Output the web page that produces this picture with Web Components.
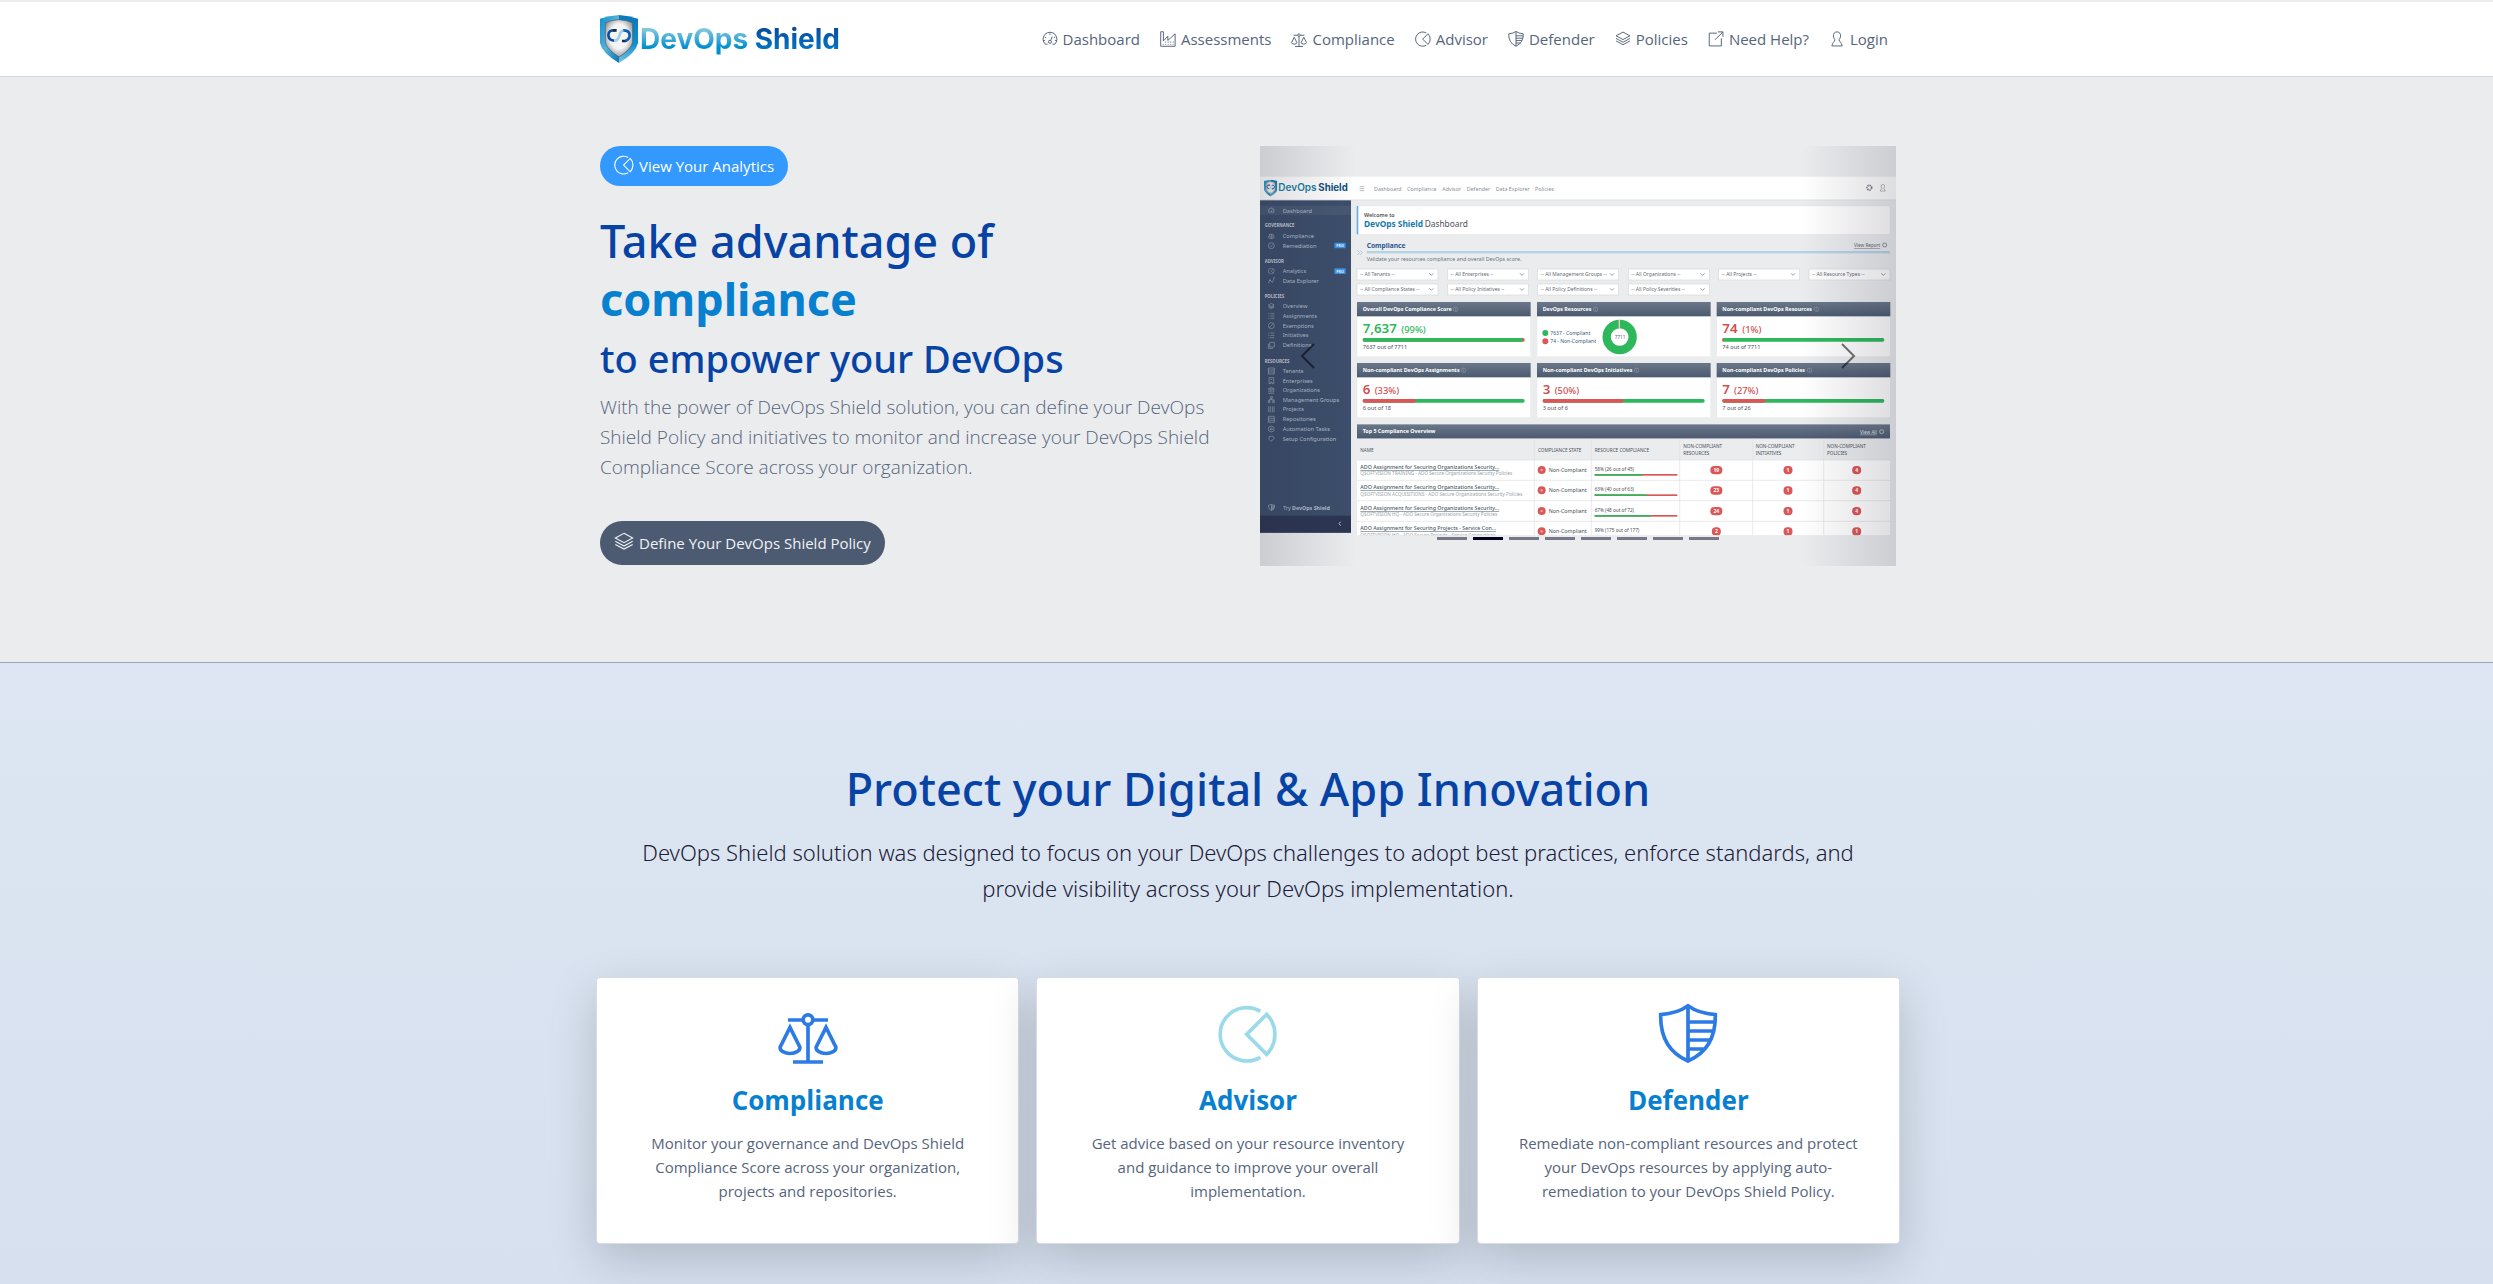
<!DOCTYPE html>
<html lang="en">
<head>
<meta charset="utf-8">
<title>DevOps Shield</title>
<style>
  html, body { margin: 0; }
  body {
    --navy: #0643a5;
    --blue: #0880d0;
    --slate: #56657c;
    --heading: "Noto Sans", "Open Sans", sans-serif;
    min-height: 100vh;
    display: flex;
    flex-direction: column;
    overflow: hidden;
    background: #fff;
    color: var(--slate);
    font: 15px/24px "Open Sans", "Noto Sans", sans-serif;
  }
  ds-protect { flex: 1; }
</style>
</head>
<body>
<ds-header>
  <ds-logo slot="brand"></ds-logo>
  <ds-nav-link icon="gauge">Dashboard</ds-nav-link>
  <ds-nav-link icon="factory">Assessments</ds-nav-link>
  <ds-nav-link icon="scales">Compliance</ds-nav-link>
  <ds-nav-link icon="pie">Advisor</ds-nav-link>
  <ds-nav-link icon="shield">Defender</ds-nav-link>
  <ds-nav-link icon="layers">Policies</ds-nav-link>
  <ds-nav-link icon="external">Need Help?</ds-nav-link>
  <ds-nav-link icon="user">Login</ds-nav-link>
</ds-header>
<ds-hero>
  <ds-pill slot="top" icon="pie">View Your Analytics</ds-pill>
  <span slot="title">Take advantage of</span>
  <span slot="accent">compliance</span>
  <span slot="subtitle">to empower your DevOps</span>
  <span slot="text">With the power of DevOps Shield solution, you can define your DevOps Shield Policy and initiatives to monitor and increase your DevOps Shield Compliance Score across your organization.</span>
  <ds-pill slot="bottom" icon="layers" tone="dark">Define Your DevOps Shield Policy</ds-pill>
  <ds-carousel slot="media"><ds-dashboard-picture></ds-dashboard-picture></ds-carousel>
</ds-hero>
<ds-protect>
  <span slot="title">Protect your Digital &amp; App Innovation</span>
  <span slot="lead">DevOps Shield solution was designed to focus on your DevOps challenges to adopt best practices, enforce standards, and provide visibility across your DevOps implementation.</span>
  <ds-card icon="scales"><span slot="title">Compliance</span>Monitor your governance and DevOps Shield Compliance Score across your organization, projects and repositories.</ds-card>
  <ds-card icon="pie" tone="light"><span slot="title">Advisor</span>Get advice based on your resource inventory and guidance to improve your overall implementation.</ds-card>
  <ds-card icon="shield"><span slot="title">Defender</span>Remediate non-compliant resources and protect your DevOps resources by applying auto-remediation to your DevOps Shield Policy.</ds-card>
</ds-protect>

<script>
// Line icons on a 180-unit grid.
const ICONS = {
  scales: '<path d="M30 48H76M104 48H150M90 62V174M45 174H135"/><circle cx="90" cy="47" r="14.500"/><path d="M36 70 7 128Q4 136 13 142 36 155 59 142 68 136 65 128ZM144 70 115 128Q112 136 121 142 144 155 167 142 176 136 173 128Z"/>',
  pie: '<path d="M127 22A80 80 0 1 0 127 160"/><path d="M86 91 146 31A85 85 0 0 1 146 151Z"/>',
  shield: '<path d="M90 5Q60 28 8 32 6 135 90 171 174 135 172 32 120 28 90 5ZM90 5V171M90 54H169M90 81H166M90 108H157M90 135H141"/>',
  gauge: '<path d="M36 148A78 78 0 1 1 144 148M36 148H62M118 148H144M90 26V46M30 66 46 76M150 66 134 76M14 106H34M146 106H166"/><circle cx="90" cy="122" r="17"/><path d="M97 106 116 62"/>',
  factory: '<path d="M8 172V8H38V112L88 58V106L170 32V172Z"/><path d="M64 118V132M92 118V132M120 118V132M148 118V132M36 146V156M64 146V156M92 146V156M120 146V156M148 146V156" stroke-width="9"/>',
  layers: '<path d="M90 12 168 54 90 96 12 54ZM12 84 90 126 168 84M12 112 90 154 168 112"/>',
  external: '<path d="M100 24H14V168H150V82M112 10H168V66M168 10 78 100"/>',
  user: '<path d="M90 10C60 10 48 32 50 58 51 76 58 88 66 98 64 124 40 124 32 168H148C140 124 116 124 114 98 122 88 129 76 130 58 132 32 120 10 90 10Z"/>'
};
const icon = (name, size, stroke) =>
  `<svg width="${size}" height="${size}" viewBox="0 0 180 180" fill="none" stroke="currentColor" stroke-width="${stroke}" aria-hidden="true">${ICONS[name]}</svg>`;

const SHIELD_MARK = `
  <defs>
    <linearGradient id="l" x1="0" y1="0" x2="1" y2="1"><stop offset="0" stop-color="#0a8fd0"/><stop offset=".5" stop-color="#53b4d8"/><stop offset="1" stop-color="#0672b9"/></linearGradient>
    <linearGradient id="r" x1="0" y1="0" x2="0" y2="1"><stop offset="0" stop-color="#0a78bf"/><stop offset=".6" stop-color="#0990cf"/><stop offset="1" stop-color="#7cc6df"/></linearGradient>
    <radialGradient id="c" cx=".5" cy=".45" r=".6"><stop offset=".55" stop-color="#f4f4f5"/><stop offset="1" stop-color="#8b8c90"/></radialGradient>
  </defs>
  <path fill="url(#l)" d="M57 0Q28 2 0 11V84Q6 114 57 144Z"/>
  <path fill="url(#r)" d="M57 0Q86 2 114 11V84Q108 114 57 144Z"/>
  <path fill="url(#c)" stroke="#55585f" stroke-width="2" d="M57 14Q34 15 16 23V82Q20 102 57 126 94 102 98 82V23Q80 15 57 14Z"/>
  <path fill="none" stroke="#0b4da0" stroke-width="8" d="M46 46Q26 44 25 60 26 76 42 77"/>
  <path fill="none" stroke="#1c2b45" stroke-width="8" d="M38 46H50M66 78H78"/>
  <path fill="none" stroke="#9fd0e6" stroke-width="8" d="M42 77Q54 78 58 62 62 46 72 46"/>
  <path fill="none" stroke="#0b5fb0" stroke-width="8" d="M70 46Q88 45 89 61 88 74 76 78"/>`;

class Base extends HTMLElement {
  connectedCallback() {
    if (this.shadowRoot) return;
    this.attachShadow({ mode: 'open' }).innerHTML = this.view();
  }
}

customElements.define('ds-header', class extends Base {
  view() {
    return `<style>
      :host { display: block; background: #fff; border-top: 2px solid #ededee; border-bottom: 1px solid #d5d9dc; }
      header { box-sizing: border-box; max-width: 1299px; min-height: 74px; margin: 0 auto; padding: 0 8px 0 3px; display: flex; align-items: center; justify-content: space-between; }
      nav { display: flex; gap: 20px; }
    </style><header><slot name="brand"></slot><nav><slot></slot></nav></header>`;
  }
});

customElements.define('ds-logo', class extends Base {
  view() {
    return `<style>
      :host { display: block; }
      a { display: flex; align-items: center; gap: 2px; text-decoration: none; font: 700 28px/36px Inter, sans-serif; white-space: pre; }
      span { color: transparent; background: linear-gradient(#90cfe0 15%, #0090d0 75%); -webkit-background-clip: text; background-clip: text; }
      .b { background-image: linear-gradient(#0a4a9c 15%, #0078c6 85%); }
    </style><a href="#"><svg width="38" height="48" viewBox="0 0 114 144" aria-hidden="true">${SHIELD_MARK}</svg><div><span>DevOps </span><span class="b">Shield</span></div></a>`;
  }
});

customElements.define('ds-nav-link', class extends Base {
  view() {
    return `<style>
      :host { display: block; }
      a { display: flex; align-items: center; gap: 5px; color: var(--slate); text-decoration: none; white-space: nowrap; }
    </style><a href="#">${icon(this.getAttribute('icon'), 16, 11)}<span><slot></slot></span></a>`;
  }
});

customElements.define('ds-pill', class extends Base {
  view() {
    return `<style>
      :host { display: block; }
      button { display: flex; align-items: center; gap: 5px; min-height: 40px; padding: 0 14px; border: 0; border-radius: 20px; background: #3399ff; color: #fff; font: inherit; cursor: pointer; }
      :host([tone="dark"]) button { min-height: 44px; border-radius: 22px; background: #4d5b72; color: #f0f2f5; }
      svg { margin-bottom: 3px; }
    </style><button type="button">${icon(this.getAttribute('icon'), 20, 10)}<span><slot></slot></span></button>`;
  }
});

customElements.define('ds-hero', class extends Base {
  view() {
    return `<style>
      :host { display: block; background: #ebecee; border-bottom: 1px solid #9aa5b6; }
      section { box-sizing: border-box; max-width: 1299px; margin: 0 auto; padding: 69px 0 96px 3px; display: grid; grid-template-columns: 1fr 1fr; gap: 24px; align-items: start; }
      .copy { display: flex; flex-direction: column; align-items: flex-start; }
      h1 { margin: 26px 0 0; color: var(--navy); font: 500 45px/58px var(--heading); }
      h1 strong { display: block; color: var(--blue); font-weight: 700; }
      h2 { margin: 6px 0 10px; color: var(--navy); font: 500 38px/48px var(--heading); }
      p { margin: 0 0 39px; font-size: 19px; line-height: 30px; font-weight: 300; }
    </style><section>
      <div class="copy">
        <slot name="top"></slot>
        <h1><slot name="title"></slot><strong><slot name="accent"></slot></strong></h1>
        <h2><slot name="subtitle"></slot></h2>
        <p><slot name="text"></slot></p>
        <slot name="bottom"></slot>
      </div>
      <slot name="media"></slot>
    </section>`;
  }
});

customElements.define('ds-carousel', class extends Base {
  view() {
    const dots = Array.from({ length: 8 }, (_, i) =>
      `<button type="button" aria-label="${i + 1}"${i === 1 ? ' class="on"' : ''}></button>`).join('');
    return `<style>
      :host { display: block; position: relative; }
      button { border: 0; padding: 0; cursor: pointer; }
      .side { position: absolute; top: 0; bottom: 0; width: 15%; display: flex; align-items: center; justify-content: center; color: rgba(0,0,0,.55); background: linear-gradient(to right, rgba(30,30,50,.15), rgba(30,30,50,0)); }
      .prev { left: 0; }
      .next { right: 0; background: linear-gradient(to left, rgba(30,30,50,.15), rgba(30,30,50,0)); }
      .dots { position: absolute; left: 0; right: 0; bottom: 26px; display: flex; justify-content: center; gap: 6px; }
      .dots button { width: 30px; height: 3px; background: #777887; }
      .dots .on { background: #02021c; }
    </style><slot></slot>
    <button type="button" class="side prev" aria-label="Previous"><svg width="32" height="32" viewBox="0 0 16 16" fill="none" stroke="currentColor"><path d="M11 2 5 8 11 14"/></svg></button>
    <button type="button" class="side next" aria-label="Next"><svg width="32" height="32" viewBox="0 0 16 16" fill="none" stroke="currentColor"><path d="M5 2 11 8 5 14"/></svg></button>
    <div class="dots">${dots}</div>`;
  }
});

// Illustration of the product dashboard, drawn at three units per pixel.
customElements.define('ds-dashboard-picture', class extends Base {
  view() {
    const t = (x, y, size, fill, text, extra = '') =>
      `<text x="${x}" y="${y}" font-size="${size}" fill="${fill}" ${extra}>${text}</text>`;
    const r = (x, y, w, h, fill, extra = '') =>
      `<rect x="${x}" y="${y}" width="${w}" height="${h}" fill="${fill}" ${extra}/>`;
    const ic = (name, x, y, size, color) =>
      `<svg x="${x}" y="${y}" width="${size}" height="${size}" viewBox="0 0 180 180" fill="none" stroke="${color}" stroke-width="14">${ICONS[name]}</svg>`;
    const bold = 'font-weight="700"', mid = 'font-weight="600"';
    const green = '#2eb85c', red = '#db5656', side = '#b4becd';
    let s = '';

    // Top bar
    s += r(0, 92, 1908, 69, '#fff') + r(0, 161, 1908, 2, '#dcdfe2');
    s += `<svg x="12" y="101" width="40" height="51" viewBox="0 0 114 144">${SHIELD_MARK}</svg>`;
    s += `<g font-family="Inter, sans-serif">${t(55, 135, 30, '#1b7fa6', 'DevOps', mid)}${t(175, 135, 29, '#114f80', 'Shield', bold)}</g>`;
    s += '<path d="M299 122H313M299 128H313M299 134H313" stroke="#999" stroke-width="2"/>';
    [[342, 'Dashboard'], [441, 'Compliance'], [547, 'Advisor'], [620, 'Defender'], [707, 'Data Explorer'], [825, 'Policies']]
      .forEach(([x, n]) => s += t(x, 134, 16, '#8b9098', n));
    s += '<circle cx="1828" cy="125" r="7" fill="none" stroke="#777d88" stroke-width="5" stroke-dasharray="4 2"/>' + ic('user', 1857, 114, 23, '#777d88');

    // Sidebar
    s += r(0, 163, 273, 997, '#3c4e6b') + r(0, 179, 273, 28, '#475873') + r(0, 1109, 273, 51, '#2c3653');
    [['Dashboard', 200, 'gauge'], ['Compliance', 276, 'scales'], ['Remediation', 305, 'check'], ['Analytics', 381, 'pie'], ['Data Explorer', 410, 'graph'],
     ['Overview', 487, 'layers'], ['Assignments', 516, 'list'], ['Exemptions', 545, 'ban'], ['Initiatives', 574, 'list'], ['Definitions', 604, 'copy'],
     ['Tenants', 681, 'box'], ['Enterprises', 710, 'door'], ['Organizations', 739, 'bank'], ['Management Groups', 767, 'tree'], ['Projects', 796, 'bars'],
     ['Repositories', 826, 'box'], ['Automation Tasks', 855, 'hex'], ['Setup Configuration', 884, 'tag']]
      .forEach(([n, y, i]) => {
        s += t(68, y, 17, side, n);
        const g = {
          check: '<circle cx="10" cy="10" r="9"/><path d="M6 10 9 13 14 7"/>', graph: '<path d="M1 18 6 8 13 15 19 1M3 8H9M16 1H20"/>',
          list: '<path d="M1 3H4M1 10H4M1 17H4M7 3H19M7 10H19M7 17H19"/>', ban: '<circle cx="10" cy="10" r="9"/><path d="M4 16 16 4"/>',
          copy: '<path d="M5 1H19V15H5ZM1 5V19H15"/>', box: '<path d="M1 1H19V19H1ZM1 7H19M1 13H19"/>', door: '<path d="M3 19V1H17V19H12V14H8V19ZM7 6H13"/>',
          bank: '<path d="M1 6 10 1 19 6ZM3 8V16M8 8V16M12 8V16M17 8V16M1 19H19"/>', tree: '<path d="M7 1H13V6H7ZM1 13H6V19H1ZM14 13H19V19H14ZM10 6V10M3 13V10H17V13"/>',
          bars: '<path d="M2 1V19M7 1V19M13 1V19M18 1V19"/>', hex: '<path d="M10 1 18 5V15L10 19 2 15V5Z"/><circle cx="10" cy="10" r="3"/>', tag: '<path d="M4 4 13 2 19 8 10 18 2 11Z"/>'
        }[i];
        s += g ? `<g transform="translate(24 ${y - 16})" fill="none" stroke="${side}" stroke-width="2" opacity=".8">${g}</g>` : ic(i, 24, y - 16, 20, side);
      });
    [['GOVERNANCE', 244], ['ADVISOR', 350], ['POLICIES', 456], ['RESOURCES', 650]].forEach(([n, y]) => s += t(14, y, 13, '#c4ccd8', n, bold));
    [290, 367].forEach(y => s += r(223, y, 34, 17, '#3b93e6', 'rx="3"') + t(240, y + 13, 11, '#e4effa', 'PRO', bold + ' text-anchor="middle"'));
    s += ic('shield', 24, 1074, 21, side) + t(69, 1092, 16, side, `Try <tspan ${bold}>DevOps Shield</tspan>`);
    s += '<path d="M242 1127 237 1133 242 1139" fill="none" stroke="#b4becd" stroke-width="3"/>';

    // Welcome panel and section heading
    s += r(290, 180, 1600, 85, '#fff', 'stroke="#e0e2e5"') + r(290, 180, 5, 85, '#67aee6');
    s += t(312, 214, 16, '#4b5057', 'Welcome to', mid) + t(312, 244, 25, '#1679ad', 'DevOps Shield', bold) + t(494, 244, 25, '#4d535b', 'Dashboard');
    s += t(320, 306, 20, '#2b5792', 'Compliance', bold) + r(320, 315, 1570, 7, '#b5d3e5') + t(320, 344, 16, '#6d747e', 'Validate your resources compliance and overall DevOps score.');
    s += '<path d="M292 313 299 320 292 327M300 313 307 320 300 327" fill="none" stroke="#aeb3ba" stroke-width="2"/>';
    s += t(1782, 303, 14, '#5e646d', 'View Report', 'text-decoration="underline"') + '<circle cx="1874" cy="297" r="6" fill="none" stroke="#5e646d" stroke-width="2"/>';

    // Filters
    const xs = [291, 563, 833, 1105, 1376, 1647];
    const sel = (x, y, n) => s += r(x, y, 243, 33, '#fff', 'stroke="#d5d8dc" stroke-width="2"') + t(x + 9, y + 22, 15, '#666c75', `-- ${n} --`) +
      `<path d="M${x + 217} ${y + 13}l6 6 6-6" fill="none" stroke="#666c75" stroke-width="2"/>`;
    ['All Tenants', 'All Enterprises', 'All Management Groups', 'All Organizations', 'All Projects', 'All Resource Types'].forEach((n, i) => sel(xs[i], 369, n));
    ['All Compliance States', 'All Policy Initiatives', 'All Policy Definitions', 'All Policy Severities'].forEach((n, i) => sel(xs[i], 414, n));

    // Score panels
    const panel = (x, y, title) => {
      s += r(x, y, 521, 164, '#fff', 'stroke="#dfe1e4"') + r(x, y, 521, 43, 'url(#head)');
      s += `<text x="${x + 17}" y="${y + 26}" font-size="16" font-weight="700" fill="#fff">${title}<tspan dx="5" font-weight="400" fill="#b9c1cc">ⓘ</tspan></text>`;
    };
    const score = (x, y, title, big, pct, px, split, a, b, note, color) => {
      panel(x, y, title);
      s += t(x + 17, y + 92, 40, color, big, 'font-weight="600"') + t(px, y + 92, 28, color, pct, 'font-weight="500"');
      s += r(x + 17, y + 108, 486, 11, b, 'rx="5"') + r(x + 17, y + 108, split, 11, a, 'rx="5"') + t(x + 17, y + 142, 17, '#4b5057', note);
    };
    score(291, 468, 'Overall DevOps Compliance Score', '7,637', '(99%)', 424, 481, green, red, '7637 out of 7711', green);
    panel(831, 468, 'DevOps Resources');
    score(1370, 468, 'Non-compliant DevOps Resources', '74', '(1%)', 1447, 5, red, green, '74 out of 7711', '#cf4f4f');
    score(291, 651, 'Non-compliant DevOps Assignments', '6', '(33%)', 344, 160, red, green, '6 out of 18', '#cf4f4f');
    score(831, 651, 'Non-compliant DevOps Initiatives', '3', '(50%)', 884, 243, red, green, '3 out of 6', '#cf4f4f');
    score(1370, 651, 'Non-compliant DevOps Policies', '7', '(27%)', 1422, 130, red, green, '7 out of 26', '#cf4f4f');
    s += `<circle cx="856" cy="561" r="9" fill="${green}"/><circle cx="856" cy="586" r="9" fill="${red}"/>`;
    s += t(871, 566, 15, '#33607f', '7637 - Compliant') + t(871, 591, 15, '#33607f', '74 - Non-Compliant');
    s += `<circle cx="1079" cy="573" r="39" fill="none" stroke="${green}" stroke-width="25"/><path d="M1078 522V546" stroke="#f3c9c6" stroke-width="4"/>` +
      t(1080, 578, 14, '#666', '7711', 'text-anchor="middle"');

    // Overview table, cut off by the bottom edge of the capture
    s += r(291, 835, 1599, 333, '#fff') + r(291, 835, 1599, 43, 'url(#head)') + r(291, 878, 1599, 64, '#ebecee');
    s += t(308, 861, 16, '#fff', 'Top 5 Compliance Overview', bold) + t(1800, 863, 14, '#dfe3e8', 'View All', 'text-decoration="underline"') +
      '<circle cx="1865" cy="857" r="6" fill="none" stroke="#dfe3e8" stroke-width="2"/>';
    s += t(301, 917, 14, '#4b515a', 'NAME') + t(834, 917, 14, '#4b515a', 'COMPLIANCE STATE') + t(1004, 917, 14, '#4b515a', 'RESOURCE COMPLIANCE');
    [[1270, 'RESOURCES'], [1487, 'INITIATIVES'], [1701, 'POLICIES']].forEach(([x, n]) => s += t(x, 905, 14, '#4b515a', 'NON-COMPLIANT') + t(x, 928, 14, '#4b515a', n));
    s += '<path d="M823 878V1168M994 878V1168M1259 878V1168M1478 878V1168M1691 878V1168M291 942H1890M291 1003H1890M291 1064H1890M291 1126H1890" stroke="#dfe1e4" stroke-width="2"/>';
    const org = 'ADO Assignment for Securing Organizations Security...';
    [[942, org, 'QSOFTVISION TRAINING - ADO Secure Organizations Security Policies', '58% (26 out of 45)', 144, '19', '1', '4'],
     [1003, org, 'QSOFTVISION ACQUISITIONS - ADO Secure Organizations Security Policies', '63% (40 out of 63)', 156, '23', '1', '4'],
     [1065, org, 'QSOFTVISION HQ - ADO Secure Organizations Security Policies', '67% (48 out of 72)', 167, '24', '1', '4'],
     [1126, 'ADO Assignment for Securing Projects - Service Con...', 'QSOFTVISION HQ - ADO Secure Projects - Service Connections', '99% (175 out of 177)', 245, '2', '1', '1']]
      .forEach(([y, name, sub, pct, w, a, b, c]) => {
        s += t(301, y + 27, 16, '#4b5a68', name, 'font-weight="500" text-decoration="underline"') + t(301, y + 46, 14, '#9a9fa6', sub);
        s += `<circle cx="845" cy="${y + 30}" r="12" fill="${red}"/><circle cx="845" cy="${y + 30}" r="4" fill="#ec9a98"/>` + t(866, y + 36, 16, '#4b5057', 'Non-Compliant');
        s += t(1004, y + 33, 14, '#4b5057', pct) + (y < 1120 ? r(1004, y + 42, 248, 5, red) + r(1004, y + 42, w, 5, green) : '');
        [[1369, a], [1584, b], [1790, c]].forEach(([x, n]) => {
          const bw = n.length > 1 ? 36 : 27;
          s += r(x - bw / 2, y + 18, bw, 25, red, 'rx="12"') + t(x, y + 36, 15, '#fff', n, bold + ' text-anchor="middle"');
        });
      });

    return `<style>
      :host { display: block; }
      svg.shot { display: block; width: 100%; height: auto; font-family: "Noto Sans", sans-serif; }
    </style>
    <svg class="shot" viewBox="0 0 1908 1260">
      <defs>
        <linearGradient id="head" x1="0" y1="0" x2="0" y2="1"><stop offset="0" stop-color="#6b7789"/><stop offset="1" stop-color="#4c5a70"/></linearGradient>
        <clipPath id="edge"><rect width="1908" height="1168"/></clipPath>
      </defs>
      <g clip-path="url(#edge)">${s}</g>
    </svg>`;
  }
});

customElements.define('ds-protect', class extends Base {
  view() {
    return `<style>
      :host { display: block; background: linear-gradient(#dde6f2, #d6e0ef); text-align: center; }
      section { box-sizing: border-box; max-width: 1307px; margin: 0 auto; padding: 97px 0 40px 3px; }
      h2 { margin: 0 0 16px; color: var(--navy); font: 500 45px/58px var(--heading); }
      p { margin: 0 auto 71px; max-width: 1260px; color: #1b2036; font: 300 22px/36px var(--heading); }
      .cards { display: grid; grid-template-columns: repeat(3, 1fr); gap: 17px; }
    </style><section>
      <h2><slot name="title"></slot></h2>
      <p><slot name="lead"></slot></p>
      <div class="cards"><slot></slot></div>
    </section>`;
  }
});

customElements.define('ds-card', class extends Base {
  view() {
    return `<style>
      :host { display: block; position: relative; background: #fff; border: 1px solid #d8dbe0; border-radius: 4px; box-shadow: 0 16px 48px rgba(0,0,0,.175); padding: 26px 40px 40px; color: #2c7be5; }
      :host([tone="light"]) { color: #9bdaea; }
      svg { display: block; margin: 0 auto 19px; }
      h3 { margin: 0 0 14px; color: var(--blue); font-size: 26px; line-height: 34px; font-weight: 700; }
      p { margin: 0; color: var(--slate); }
    </style>${icon(this.getAttribute('icon'), 60, 11)}
    <h3><slot name="title"></slot></h3>
    <p><slot></slot></p>`;
  }
});
</script>
</body>
</html>
